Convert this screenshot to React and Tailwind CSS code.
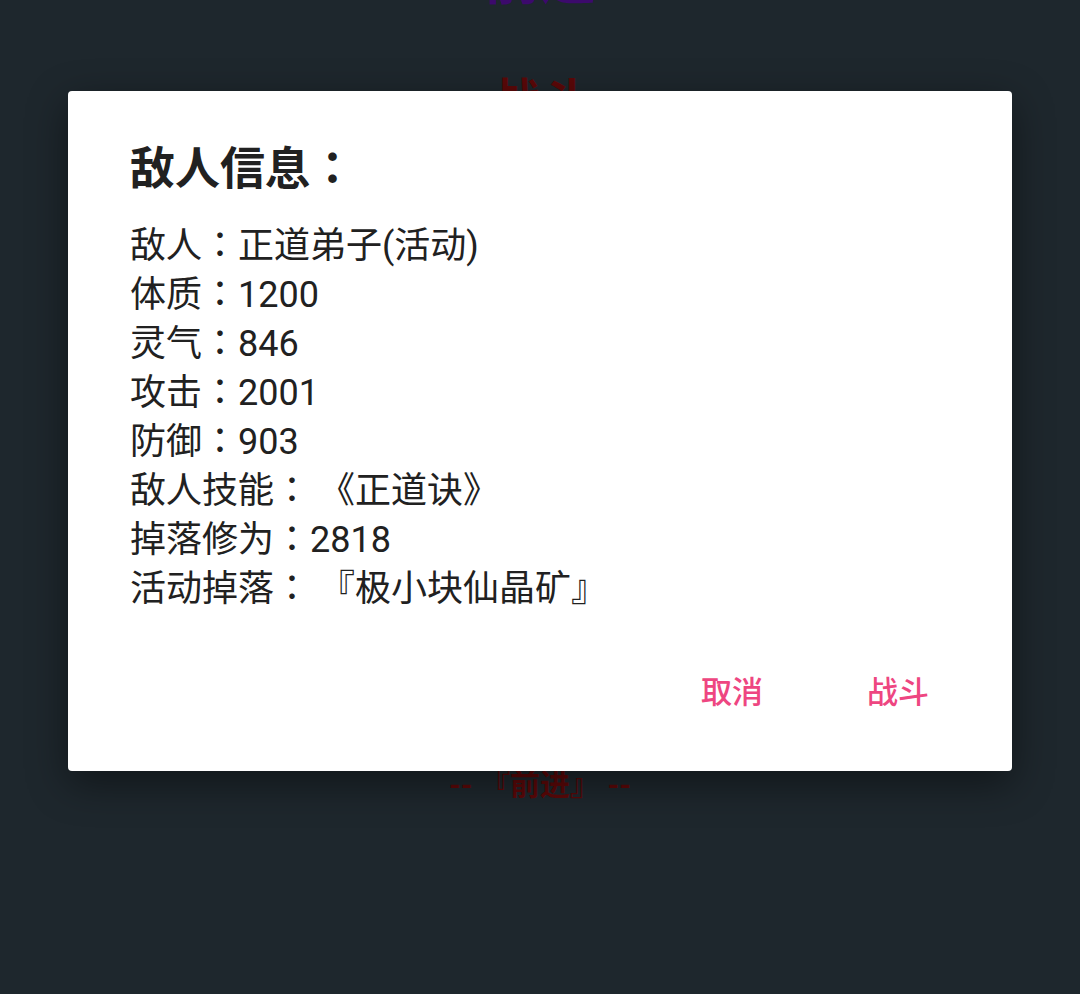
import React from "react";

const lines = [
  "敌人：正道弟子(活动)",
  "体质：1200",
  "灵气：846",
  "攻击：2001",
  "防御：903",
  "敌人技能： 《正道诀》",
  "掉落修为：2818",
  "活动掉落： 『极小块仙晶矿』",
];

export default function App() {
  return (
    <div
      className="relative h-[994px] w-[1080px] overflow-hidden bg-[#1e272d] [text-spacing-trim:space-all]"
      style={{ fontFamily: 'Roboto, "Noto Sans CJK JP", sans-serif' }}
    >
      {/* dimmed screen behind the dialog */}
      <div className="flex flex-col items-center">
        <div className="mt-[-52px] text-[56px] font-bold leading-[64px] text-[#3c0a6c]">前进</div>
        <div className="mt-[62px] text-[48px] font-bold leading-[56px] text-[#5c0808]">战斗</div>
        <div className="mt-[635px] text-[30px] font-bold leading-[40px] text-[#5c0808]">-- 『前进』 --</div>
      </div>

      {/* dialog */}
      <div className="absolute left-[68px] top-[91px] flex h-[680px] w-[944px] flex-col rounded-[4px] bg-white pl-[62px] pr-[51px] pt-[52px] shadow-[0_12px_40px_rgba(0,0,0,0.45)]">
        <h2 className="text-[45px] font-bold leading-[54px] text-[#212121]">敌人信息：</h2>
        <div className="mt-[25px] flex flex-col text-[36px] leading-[49px] text-[#212121]">
          {lines.map((l) => (
            <div key={l} className="whitespace-pre">{l}</div>
          ))}
        </div>
        <div className="mt-[43px] flex justify-end gap-[40px]">
          <button className="h-[72px] px-[32px] text-[31px] font-medium text-[#ee4681]">取消</button>
          <button className="h-[72px] px-[32px] text-[31px] font-medium text-[#ee4681]">战斗</button>
        </div>
      </div>
    </div>
  );
}
